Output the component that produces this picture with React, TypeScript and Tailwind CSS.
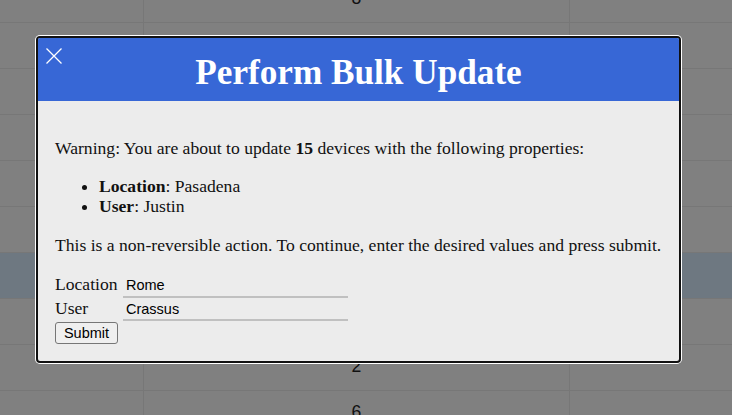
import React from "react";

const rowNums = ["8", "3", "5", "1", "9", "4", "7", "0", "2", "6"];

export default function App() {
  return (
    <div className="relative w-[732px] h-[415px] overflow-hidden bg-[#808080] font-['Liberation_Sans',Arial,sans-serif]">
      <div className="-mt-[23px]">
        {rowNums.map((n, i) => (
          <div
            key={i}
            className={`flex h-[46px] border-b border-[#777777] ${i === 6 ? "bg-[#6e7881]" : ""}`}
          >
            <div className="w-[144px] border-r border-[#777777]" />
            <div className="w-[426px] border-r border-[#777777] flex items-center justify-center pb-[2px] text-[17.6px] text-[#111]">
              {n}
            </div>
            <div className="flex-1" />
          </div>
        ))}
      </div>

      <div className="absolute left-[36px] top-[36px] w-[645px] h-[327px] border-2 border-[#111] rounded-[4px] ring-1 ring-white bg-[#ececec] overflow-hidden font-['Liberation_Serif','Times_New_Roman',serif] text-[#111]">
        <div className="relative h-[63px] bg-[#3767d6] flex items-start justify-center">
          <svg
            className="absolute left-[8px] top-[10px]"
            width="16"
            height="16"
            viewBox="0 0 16 16"
          >
            <path d="M0.5 0.5 L15.5 15.5 M15.5 0.5 L0.5 15.5" stroke="white" strokeWidth="1.3" fill="none" />
          </svg>
          <h1 className="mt-[15px] text-[35.2px] font-bold text-white leading-[40px]">Perform Bulk Update</h1>
        </div>
        <div className="px-[17px] pt-[37px] text-[17.6px] leading-[20.2px]">
          <p>
            Warning: You are about to update <b>15</b> devices with the following properties:
          </p>
          <ul className="list-disc pl-[44px] mt-[17.8px] leading-[20.4px]">
            <li>
              <b>Location</b>: Pasadena
            </li>
            <li>
              <b>User</b>: Justin
            </li>
          </ul>
          <p className="mt-[18.6px]">
            This is a non-reversible action. To continue, enter the desired values and press submit.
          </p>
          <div className="mt-[18.6px]">
            <div className="flex items-baseline h-[23.6px]">
              <span className="w-[68px] leading-[20.2px]">Location</span>
              <input
                readOnly
                value="Rome"
                className="w-[225px] h-[21px] bg-transparent border-b-2 border-[#c0c0c0] px-[3px] pb-[2px] leading-[17px] text-[14.5px] font-['Liberation_Sans',Arial,sans-serif] text-black outline-none"
              />
            </div>
            <div className="flex items-baseline h-[23.6px]">
              <span className="w-[68px] leading-[20.2px]">User</span>
              <input
                readOnly
                value="Crassus"
                className="w-[225px] h-[21px] bg-transparent border-b-2 border-[#c0c0c0] px-[3px] pb-[2px] leading-[17px] text-[14.5px] font-['Liberation_Sans',Arial,sans-serif] text-black outline-none"
              />
            </div>
          </div>
          <button className="block mt-[0.5px] h-[22px] w-[63px] border border-[#767676] rounded-[3px] bg-[#efefef] text-[14.5px] leading-[18px] font-['Liberation_Sans',Arial,sans-serif] text-black">
            Submit
          </button>
        </div>
      </div>
    </div>
  );
}
